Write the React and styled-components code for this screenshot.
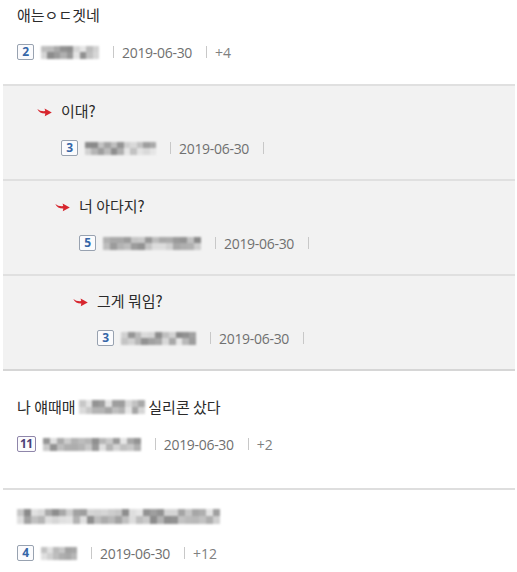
import React from "react";
import styled, { createGlobalStyle } from "styled-components";

const GlobalStyle = createGlobalStyle`
  html, body {
    margin: 0;
    padding: 0;
    background: #fff;
  }
  body {
    font-family: "Noto Sans CJK KR", "Noto Sans", sans-serif;
    color: #333;
  }
`;

const comments = [
  { id: 1, text: "애는ㅇㄷ겟네", badge: "2", name: 58, extra: "+4", pt: 4, pb: 23 },
  {
    id: 5,
    text: ["나 얘때매 ", { blur: 66 }, " 실리콘 샀다"],
    badge: "11",
    tone: "purple",
    name: 98,
    extra: "+2",
    pt: 25,
    pb: 35,
  },
  { id: 6, text: [{ blur: 203, h: 15 }], badge: "4", name: 36, extra: "+12", pt: 15, pb: 11, border: true },
];

const replies = [
  { id: 2, depth: 1, text: "이대?", badge: "3", name: 71 },
  { id: 3, depth: 2, text: "너 아다지?", badge: "5", name: 98 },
  { id: 4, depth: 3, text: "그게 뭐임?", badge: "3", name: 75 },
];

// pseudo random shades for the pixelated names
const shade = (seed, i) => {
  const v = Math.abs(Math.sin(seed * 12.9898 + i * 78.233) * 43758.5453) % 1;
  const g = Math.round(125 + v * 105);
  return `rgb(${g},${g},${g})`;
};

const Mosaic = ({ width, height = 13, seed = 1 }) => {
  const cols = Math.ceil(width / 7);
  const cells = [];
  for (let r = 0; r < 2; r++) {
    for (let c = 0; c < cols; c++) {
      cells.push(<Cell key={`${r}-${c}`} style={{ background: shade(seed, r * 31 + c) }} />);
    }
  }
  return (
    <MosaicBox $w={width} $h={height} $cols={cols}>
      {cells}
    </MosaicBox>
  );
};

const Arrow = () => (
  <ArrowIcon viewBox="0 0 15 10" width="15" height="10">
    <path
      d="M0.3 2 Q3.5 4.6 8.2 4.1 L7.6 1.4 L14.8 5.6 L7.8 9.2 L8.3 6.6 Q2.6 6.8 0.3 2 Z"
      fill="#d7262e"
    />
  </ArrowIcon>
);

const Meta = ({ badge, tone, name, extra, seed }) => (
  <MetaRow>
    <Badge $tone={tone}>{badge}</Badge>
    <Mosaic width={name} seed={seed} />
    <Sep />
    <DateText>2019-06-30</DateText>
    <Sep />
    {extra && <Extra>{extra}</Extra>}
  </MetaRow>
);

const renderText = (text, seed) =>
  Array.isArray(text)
    ? text.map((part, i) =>
        typeof part === "string" ? (
          <span key={i}>{part}</span>
        ) : (
          <Mosaic key={i} width={part.blur} height={part.h || 14} seed={seed + i * 7} />
        )
      )
    : text;

export default function App() {
  const [first, ...rest] = comments;
  return (
    <>
      <GlobalStyle />
      <List>
        <Comment $pt={first.pt} $pb={first.pb}>
          <Body>{renderText(first.text, 1)}</Body>
          <Meta {...first} seed={3} />
        </Comment>

        <ReplyGroup>
          {replies.map((r) => (
            <Reply key={r.id} $depth={r.depth}>
              <Body>
                <Arrow />
                {r.text}
              </Body>
              <ReplyMeta>
                <Meta {...r} seed={r.id * 5} />
              </ReplyMeta>
            </Reply>
          ))}
        </ReplyGroup>

        {rest.map((c) => (
          <Comment key={c.id} $pt={c.pt} $pb={c.pb} $border={c.border}>
            <Body>{renderText(c.text, c.id * 3)}</Body>
            <Meta {...c} seed={c.id * 11} />
          </Comment>
        ))}
      </List>
    </>
  );
}

const List = styled.div`
  width: 517px;
`;

const Comment = styled.div`
  padding: ${(p) => p.$pt}px 17px ${(p) => p.$pb}px 14px;
  margin: 0 2px 0 3px;
  border-top: ${(p) => (p.$border ? "2px solid #dedede" : "none")};
  display: flex;
  flex-direction: column;
  gap: 17px;
`;

const ReplyGroup = styled.div`
  margin: 0 2px 0 3px;
  background: #f2f2f2;
  border-bottom: 2px solid #d6d6d6;
`;

const Reply = styled.div`
  border-top: 2px solid #e0e0e0;
  padding: 14px 16px 22px ${(p) => 34 + (p.$depth - 1) * 18}px;
  display: flex;
  flex-direction: column;
  gap: 17px;
`;

const Body = styled.div`
  display: flex;
  align-items: center;
  height: 22px;
  font-size: 15px;
  line-height: 22px;
  color: #2b2b2b;
  white-space: pre;
`;

const ArrowIcon = styled.svg`
  flex: none;
  margin-right: 9px;
  margin-top: 1px;
`;

const ReplyMeta = styled.div`
  padding-left: 24px;
`;

const MetaRow = styled.div`
  display: flex;
  align-items: center;
  height: 18px;
  font-size: 14px;
  color: #777;
`;

const Badge = styled.span`
  box-sizing: border-box;
  min-width: 17px;
  height: 16px;
  padding: 0 2px;
  margin-right: 7px;
  border: 1px solid ${(p) => (p.$tone === "purple" ? "#8f86aa" : "#98a2b0")};
  border-radius: 2px;
  background: #fbfbfd;
  display: inline-flex;
  align-items: center;
  justify-content: center;
  font-family: "Noto Sans", sans-serif;
  font-size: 12px;
  font-weight: 700;
  letter-spacing: -0.5px;
  line-height: 1;
  color: ${(p) => (p.$tone === "purple" ? "#4b3f78" : "#3566a8")};
`;

const MosaicBox = styled.span`
  display: inline-grid;
  grid-template-columns: repeat(${(p) => p.$cols}, 1fr);
  grid-template-rows: 1fr 1fr;
  width: ${(p) => p.$w}px;
  height: ${(p) => p.$h}px;
  overflow: hidden;
  filter: blur(0.8px);
  opacity: 0.9;
  flex: none;
`;

const Cell = styled.span`
  display: block;
`;

const Sep = styled.span`
  width: 1px;
  height: 12px;
  background: #c8c8c8;
  margin: 0 8px 0 14px;
  flex: none;
`;

const DateText = styled.span`
  font-family: "Open Sans", "Noto Sans", sans-serif;
  font-size: 14px;
  letter-spacing: -0.3px;
  color: #707070;
`;

const Extra = styled.span`
  font-family: "Open Sans", "Noto Sans", sans-serif;
  font-size: 14px;
  color: #808080;
`;
